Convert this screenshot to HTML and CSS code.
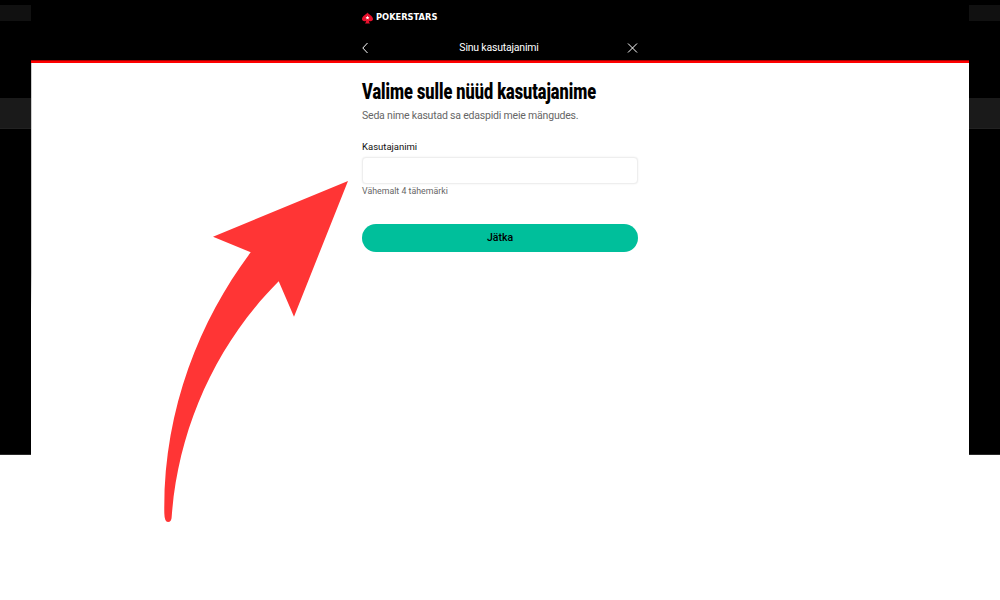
FILE: index.html
```html
<!DOCTYPE html>
<html lang="et">
<head>
<meta charset="utf-8">
<title>Sinu kasutajanimi</title>
<link rel="stylesheet" href="styles.css">
</head>
<body>
<div class="stage">
  <div class="side"><div class="strip strip-top"></div><div class="strip strip-mid"></div></div>
  <main class="modal">
    <header class="modal-head">
      <div class="head-inner">
        <div class="brand">
          <svg class="brand-mark" viewBox="0 0 12 12" aria-hidden="true">
            <path fill="#e8112d" d="M6 0C6.800 2 12 3.600 12 7.200c0 2.300-2.800 3-4.600 1.700.2 1.100.6 2.100 1.300 3.100H3.300c.7-1 1.100-2 1.300-3.100C2.800 10.200 0 9.500 0 7.200 0 3.600 5.200 2 6 0z"/>
            <path fill="#fff" d="M6 3.600l.6 1.400 1.500.1-1.100 1 .3 1.500L6 6.900l-1.300.7.300-1.500-1.100-1 1.500-.1z"/>
          </svg>
          <span class="brand-name">POKERSTARS</span>
        </div>
        <div class="title-row">
          <svg class="nav-icon back" viewBox="0 0 10 12" aria-hidden="true"><path d="M5.500 1 .8 6l4.700 5"/></svg>
          <h2 class="title">Sinu kasutajanimi</h2>
          <svg class="nav-icon close" viewBox="0 0 12 12" aria-hidden="true"><path d="M2 1.500l9 9M11 1.500l-9 9"/></svg>
        </div>
      </div>
    </header>
    <section class="modal-body">
      <h1 class="heading">Valime sulle nüüd kasutajanime</h1>
      <p class="sub">Seda nime kasutad sa edaspidi meie mängudes.</p>
      <label class="label" for="username">Kasutajanimi</label>
      <input class="input" id="username" type="text">
      <p class="hint">Vähemalt 4 tähemärki</p>
      <button class="cta" type="button">Jätka</button>
    </section>
  </main>
  <div class="side"><div class="strip strip-top"></div><div class="strip strip-mid"></div></div>
</div>
<svg class="arrow" viewBox="0 0 1000 600" aria-hidden="true">
  <path fill="#ff3535" d="M348 181 213 236.700 250.700 252.300C200 320 163 410 164.300 513Q164.500 522 168 522Q171.500 522 171.700 516.700C178 430 215 345 278.700 281.300L294 316.700Z"/>
</svg>
</body>
</html>
```
FILE: styles.css
```css
* { box-sizing: border-box; }
html, body { margin: 0; height: 100%; background: #fff; overflow: hidden; }
body { position: relative; font-family: Roboto, "Liberation Sans", sans-serif; }

.stage { display: grid; grid-template-columns: 31px 938px 31px; height: 455px; background: #000; overflow: hidden; }
.side { display: flex; flex-direction: column; border-bottom: 1px solid #2a2a2a; }
.strip-top { height: 16px; margin-top: 5px; background: #111; }
.strip-mid { height: 31px; margin-top: 77px; background: #1a1a1a; border-bottom: 1px solid #222; }

.modal { display: flex; flex-direction: column; background: linear-gradient(#ccc 60%, #fff 68%) left top / 1px 100% no-repeat, #fff; }
.modal-head { height: 63px; background: #000; border-bottom: 2px solid #f00; box-shadow: inset 0 -1px 0 #a00; flex: none; }
.head-inner { width: 276px; margin: 0 auto; }
.brand { display: flex; align-items: center; gap: 3px; height: 35px; }
.brand-mark { width: 11px; height: 12px; }
.brand-name { font: 700 8.300px/1 "DejaVu Sans", "Liberation Sans", sans-serif; color: #fff; }
.title-row { display: flex; align-items: center; justify-content: space-between; height: 25px; }
.title { margin: 1px 0 0; font: 400 10.500px/1 Roboto, sans-serif; letter-spacing: -.2px; color: #fff; }
.nav-icon { fill: none; stroke: #fff; stroke-width: 1; }
.back { width: 10px; height: 12px; }
.close { width: 12px; height: 12px; }

.modal-body { width: 276px; margin: 0 auto; display: flex; flex-direction: column; }
.heading { margin: 17px 0 0; align-self: flex-start; font: 900 22px/24px Roboto, "Liberation Sans", sans-serif; color: #000; white-space: nowrap; transform: scaleX(.74); transform-origin: left center; }
.sub { margin: 5px 0 0; font-size: 10.500px; letter-spacing: -.2px; line-height: 14px; color: #666; white-space: nowrap; }
.label { margin-top: 17px; font-size: 9.500px; line-height: 13px; color: #111; }
.input { height: 27px; margin-top: 4px; border: 1px solid #eee; border-radius: 4px; background: #fff; box-shadow: 0 0 2px rgba(0,0,0,.08); outline: 0; }
.hint { margin: 1px 0 0; font-size: 8.800px; line-height: 13px; color: #666; }
.cta { height: 28px; margin-top: 26px; border: 0; border-radius: 14px; background: #00bf9b; color: #000; font: 500 10.500px/1 Roboto, sans-serif; }

.arrow { position: absolute; left: 0; top: 0; width: 1000px; height: 600px; pointer-events: none; }
```
